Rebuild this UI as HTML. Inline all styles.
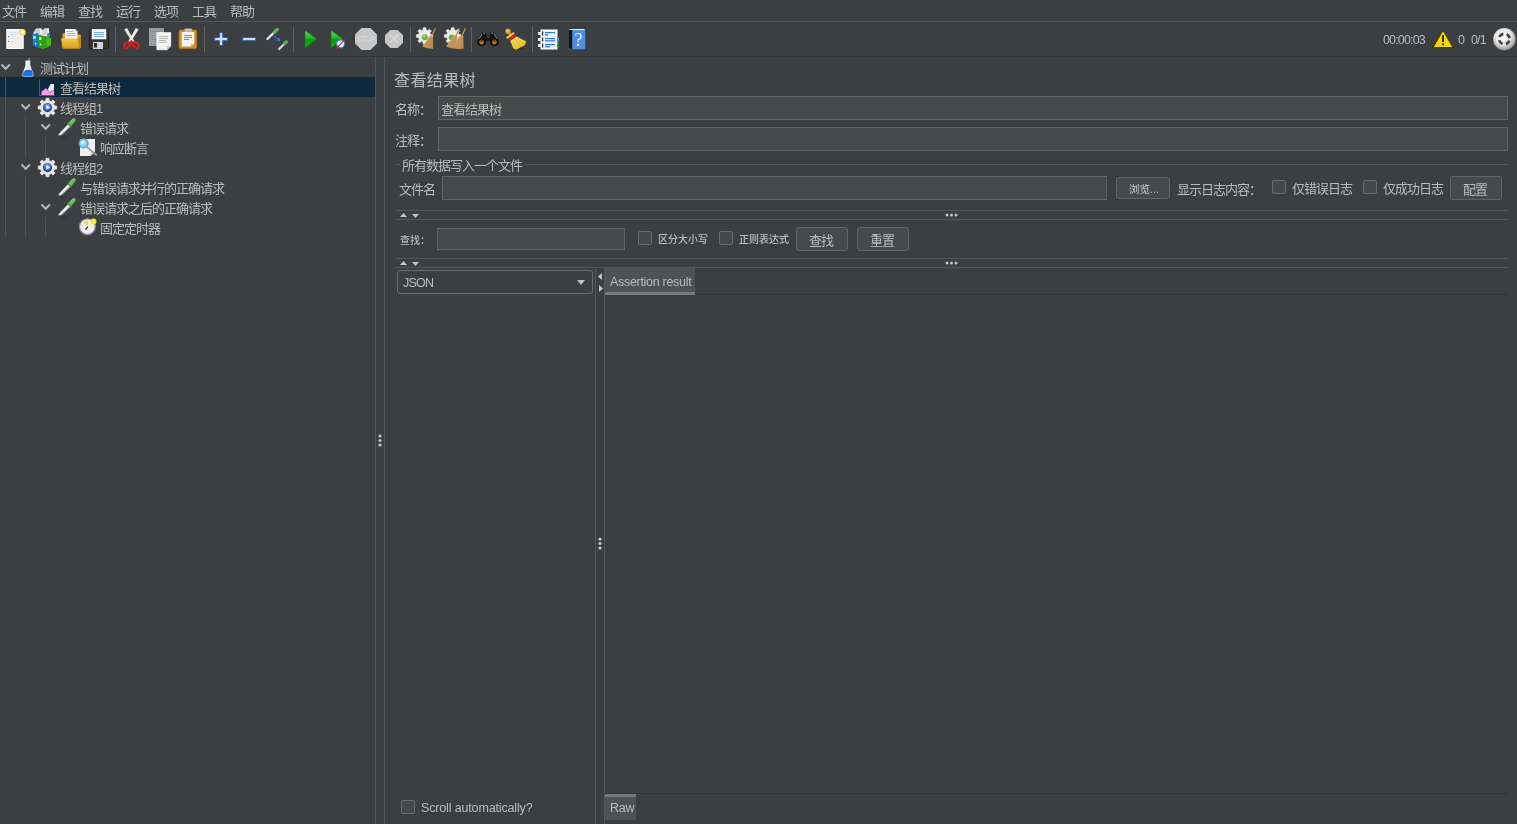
<!DOCTYPE html>
<html lang="zh-CN">
<head>
<meta charset="utf-8">
<title>Apache JMeter</title>
<style>
html,body{margin:0;padding:0;}
body{width:1517px;height:824px;overflow:hidden;background:#3c3f41;color:#bbbbbb;
  font-family:"Liberation Sans","Noto Sans CJK SC",sans-serif;font-size:12px;position:relative;}
.abs{position:absolute;}
#menubar,#toolbar,#tree,#panel{will-change:transform;}
.t{position:absolute;white-space:nowrap;line-height:16px;height:16px;font-size:13px;letter-spacing:-1px;color:#bbbbbb;margin-top:1px;}
.s{font-size:10px;letter-spacing:0;font-weight:500;}
.l{font-size:12.5px;letter-spacing:-0.3px;}
.hl{position:absolute;height:1px;background:#555555;}
.vl{position:absolute;width:1px;background:#555555;}
.fld{position:absolute;box-sizing:border-box;border:1px solid #646464;background:#45494a;}
.btn{position:absolute;box-sizing:border-box;border:1px solid #5f6668;border-radius:3px;background:#454a4b;text-align:center;}
.cb{position:absolute;box-sizing:border-box;width:14px;height:14px;border:1px solid #6b6b6b;border-radius:2px;background:#43494a;}
svg{position:absolute;overflow:visible;}
</style>
</head>
<body>

<!-- ===== menu bar ===== -->
<div id="menubar" class="abs" style="left:0;top:0;width:1517px;height:21px;">
  <div class="t" style="left:2px;top:3px;">文件</div>
  <div class="t" style="left:40px;top:3px;">编辑</div>
  <div class="t" style="left:78px;top:3px;">查找</div>
  <div class="t" style="left:116px;top:3px;">运行</div>
  <div class="t" style="left:154px;top:3px;">选项</div>
  <div class="t" style="left:192px;top:3px;">工具</div>
  <div class="t" style="left:230px;top:3px;">帮助</div>
</div>
<div class="hl" style="left:0;top:21px;width:1517px;"></div>

<!-- ===== toolbar ===== -->
<div id="toolbar" class="abs" style="left:0;top:0;width:1517px;height:0;">
  <div class="t l" style="left:1383px;top:31px;font-size:12.5px;letter-spacing:-0.85px;">00:00:03</div>
  <div class="t l" style="left:1458px;top:31px;font-size:12.5px;letter-spacing:-0.85px;">0</div>
  <div class="t l" style="left:1471px;top:31px;font-size:12.5px;letter-spacing:-0.85px;">0/1</div>
<!--TOOLBAR-->
</div>
<div class="hl" style="left:0;top:56px;width:1517px;background:#323537;"></div>

<!-- ===== tree ===== -->
<div id="tree" class="abs" style="left:0;top:0;width:375px;height:0;">
  <div class="abs" style="left:0;top:77px;width:375px;height:20px;background:#0d293e;"></div>

  <div class="vl" style="left:5px;top:77px;height:160px;"></div>
  <div class="vl" style="left:25px;top:117px;height:40px;"></div>
  <div class="vl" style="left:25px;top:177px;height:60px;"></div>
  <div class="vl" style="left:45px;top:137px;height:20px;"></div>
  <div class="vl" style="left:45px;top:217px;height:20px;"></div>
  <div class="t" style="left:40px;top:60px;">测试计划</div>
  <div class="t" style="left:60px;top:80px;">查看结果树</div>
  <div class="t" style="left:60px;top:100px;">线程组1</div>
  <div class="t" style="left:80px;top:120px;">错误请求</div>
  <div class="t" style="left:100px;top:140px;">响应断言</div>
  <div class="t" style="left:60px;top:160px;">线程组2</div>
  <div class="t" style="left:80px;top:180px;">与错误请求并行的正确请求</div>
  <div class="t" style="left:80px;top:200px;">错误请求之后的正确请求</div>
  <div class="t" style="left:100px;top:220px;">固定定时器</div>
<!--TREE-->
</div>
<div class="vl" style="left:375px;top:57px;height:767px;"></div>
<div class="vl" style="left:384px;top:57px;height:767px;"></div>

<!-- ===== right panel ===== -->
<div id="panel" class="abs" style="left:0;top:0;width:1517px;height:0;">

  <div class="t" style="left:394px;top:69px;font-size:16px;letter-spacing:0.4px;line-height:22px;height:22px;">查看结果树</div>
  <div class="t" style="left:395px;top:101px;">名称：</div>
  <div class="fld" style="left:438px;top:96px;width:1070px;height:24px;"></div>
  <div class="t" style="left:441px;top:101px;">查看结果树</div>
  <div class="t" style="left:395px;top:132px;">注释：</div>
  <div class="fld" style="left:438px;top:127px;width:1070px;height:24px;"></div>

  <div class="hl" style="left:397px;top:164px;width:3px;"></div>
  <div class="hl" style="left:524px;top:164px;width:983px;"></div>
  <div class="t" style="left:402px;top:157px;">所有数据写入一个文件</div>
  <div class="t" style="left:399px;top:181px;">文件名</div>
  <div class="fld" style="left:442px;top:176px;width:665px;height:24px;"></div>
  <div class="btn" style="left:1116px;top:177px;width:54px;height:22px;"><span class="t s" style="left:12px;top:2px;font-size:10.5px;">浏览...</span></div>
  <div class="t" style="left:1177px;top:181px;">显示日志内容：</div>
  <div class="cb" style="left:1272px;top:180px;"></div>
  <div class="t" style="left:1292px;top:180px;">仅错误日志</div>
  <div class="cb" style="left:1363px;top:180px;"></div>
  <div class="t" style="left:1383px;top:180px;">仅成功日志</div>
  <div class="btn" style="left:1450px;top:176px;width:52px;height:24px;"><span class="t" style="left:12px;top:4px;">配置</span></div>

  <div class="hl" style="left:395px;top:210px;width:1113px;"></div>
  <div class="hl" style="left:395px;top:219px;width:1113px;"></div>

  <div class="t s" style="left:400px;top:232px;">查找：</div>
  <div class="fld" style="left:437px;top:228px;width:188px;height:22px;"></div>
  <div class="cb" style="left:638px;top:231px;"></div>
  <div class="t s" style="left:658px;top:231px;">区分大小写</div>
  <div class="cb" style="left:719px;top:231px;"></div>
  <div class="t s" style="left:739px;top:231px;">正则表达式</div>
  <div class="btn" style="left:796px;top:227px;width:52px;height:24px;"><span class="t" style="left:12px;top:4px;">查找</span></div>
  <div class="btn" style="left:857px;top:227px;width:52px;height:24px;"><span class="t" style="left:12px;top:4px;">重置</span></div>

  <div class="hl" style="left:395px;top:258px;width:1113px;"></div>
  <div class="hl" style="left:395px;top:267px;width:1113px;"></div>

  <div class="btn" style="left:397px;top:270px;width:196px;height:24px;background:#3c3f41;border-color:#6b6b6b;"><span class="t l" style="left:5px;top:3px;letter-spacing:-0.8px;">JSON</span></div>
  <div class="vl" style="left:595px;top:268px;height:556px;"></div>
  <div class="vl" style="left:604px;top:268px;height:556px;"></div>
  <div class="abs" style="left:605px;top:268px;width:90px;height:27px;background:#4e5254;"></div>
  <div class="abs" style="left:605px;top:292px;width:90px;height:3px;background:#747a80;"></div>
  <div class="t l" style="left:610px;top:273px;">Assertion result</div>
  <div class="hl" style="left:695px;top:294px;width:813px;background:#323537;"></div>

  <div class="cb" style="left:401px;top:800px;"></div>
  <div class="t l" style="left:421px;top:799px;letter-spacing:-0.15px;">Scroll automatically?</div>
  <div class="hl" style="left:605px;top:793px;width:903px;background:#323537;"></div>
  <div class="abs" style="left:605px;top:794px;width:31px;height:26px;background:#4e5254;"></div>
  <div class="abs" style="left:605px;top:794px;width:31px;height:3px;background:#747a80;"></div>
  <div class="t l" style="left:610px;top:799px;">Raw</div>
<!--PANEL-->
</div>

<!--ICONS-->
<svg id="icons" width="1517" height="824" viewBox="0 0 1517 824" style="left:0;top:0;">
<defs>
  <linearGradient id="gGreen" x1="0" y1="0" x2="0" y2="1"><stop offset="0" stop-color="#5fd65f"/><stop offset="0.45" stop-color="#1fb81f"/><stop offset="0.5" stop-color="#0a9a0a"/><stop offset="1" stop-color="#08c008"/></linearGradient>
  <linearGradient id="gFolder" x1="0" y1="0" x2="0" y2="1"><stop offset="0" stop-color="#f3c64a"/><stop offset="1" stop-color="#d99a1c"/></linearGradient>
  <radialGradient id="gSphere" cx="0.45" cy="0.4" r="0.6"><stop offset="0" stop-color="#ffffff"/><stop offset="0.6" stop-color="#e4e4e4"/><stop offset="1" stop-color="#8f8f8f"/></radialGradient>
  <radialGradient id="gBlue" cx="0.5" cy="0.35" r="0.7"><stop offset="0" stop-color="#9cc8f0"/><stop offset="0.5" stop-color="#3a66c0"/><stop offset="1" stop-color="#142c80"/></radialGradient>
  <radialGradient id="gLens" cx="0.4" cy="0.4" r="0.7"><stop offset="0" stop-color="#b8ecff"/><stop offset="1" stop-color="#58b8f0"/></radialGradient>
  <linearGradient id="gBroom" x1="0" y1="0" x2="1" y2="1"><stop offset="0" stop-color="#d8b078"/><stop offset="1" stop-color="#b8864a"/></linearGradient>
  <linearGradient id="gYBroom" x1="0" y1="0" x2="1" y2="1"><stop offset="0" stop-color="#fbe96a"/><stop offset="1" stop-color="#e0b818"/></linearGradient>
</defs>

<!-- toolbar separators -->
<g fill="#616365">
  <rect x="115" y="27" width="1" height="25"/>
  <rect x="204" y="27" width="1" height="25"/>
  <rect x="293" y="27" width="1" height="25"/>
  <rect x="410" y="27" width="1" height="25"/>
  <rect x="471" y="27" width="1" height="25"/>
  <rect x="532" y="27" width="1" height="25"/>
</g>

<!-- new -->
<g>
  <rect x="6.8" y="29.5" width="16.4" height="19" fill="#efefef" stroke="#ffffff" stroke-width="1"/>
  <g fill="#c9d9ee" opacity="0.6"><rect x="9" y="32" width="8" height="1"/><rect x="10" y="34" width="7" height="1"/><rect x="11" y="36" width="4" height="1"/><rect x="11" y="38" width="5" height="1"/><rect x="10" y="41" width="4" height="1"/></g>
  <circle cx="8.5" cy="36.5" r="0.6" fill="#55557a"/><circle cx="8.5" cy="41.5" r="0.6" fill="#55557a"/>
  <circle cx="22.3" cy="32.5" r="3.4" fill="#f3df6a"/>
  <circle cx="22.3" cy="32.2" r="1.5" fill="#ffffff"/>
</g>

<!-- templates -->
<g>
  <polygon points="33,33.5 36,28.6 41,28.2 42.5,30 45,28.2 49,28.2 49.4,37 43,36 38,35" fill="#e2e2e2"/>
  <polygon points="35.5,30.5 39.5,28.6 40,33.5 36,34" fill="#c6c6c6"/>
  <polygon points="42.5,30.5 47,28.6 47.3,34 43,35" fill="#d0d0d0"/>
  <polygon points="40,29 41.5,28.6 42,34 40.5,34" fill="#f8f8f8"/>
  <polygon points="47.2,33.6 49.3,33 49.5,37.6 47.3,37" fill="#2a8adc"/>
  <polygon points="32,34 38.3,33.2 39,47.8 33.4,45.6" fill="#1a86d8"/>
  <polygon points="36,33.5 38.3,33.2 39,47.8 36.6,46.9" fill="#1272c4"/>
  <rect x="33.3" y="36.2" width="2.4" height="2.6" fill="#d8e8f0"/>
  <rect x="35" y="43" width="1.3" height="1.3" fill="#e8eef8"/>
  <polygon points="38,35.2 42.5,35.8 43,49 38.5,47.6" fill="#22a814"/>
  <polygon points="42.5,35.8 51,38 51,45.5 43,49" fill="#48b80e"/>
  <polygon points="42.5,35.8 46.5,36.9 46.5,47.4 43,49" fill="#2c9e0c"/>
  <rect x="39.2" y="37.2" width="2.2" height="2.8" fill="#e8f4d0"/>
  <rect x="39.8" y="43.8" width="1.4" height="1.4" fill="#f0f8e8"/>
</g>

<!-- open -->
<g>
  <polygon points="62.5,34 64,33 70,33 71,34.5 80.5,34.5 81,36 81,47.5 62.5,47.5" fill="#e3a51c"/>
  <polygon points="65,29 75,29 77.5,31.5 77.5,39 65,39" fill="#f4f6fa"/>
  <polygon points="75,29 77.5,31.5 75,31.5" fill="#c8ccd4"/>
  <g fill="#a8b4cc"><rect x="66.5" y="31" width="7" height="1"/><rect x="66.5" y="33" width="9" height="1"/><rect x="66.5" y="35" width="9" height="1"/></g>
  <polygon points="61,38.5 77.5,38.5 79.7,48.7 62.7,48.7" fill="url(#gFolder)"/>
  <polygon points="77.5,38.5 81,36.5 81,47.5 79.7,48.7" fill="#c98a12"/>
</g>

<!-- save -->
<g>
  <rect x="89.4" y="29.2" width="19.2" height="19.6" rx="1" fill="#343434" stroke="#1c1c1c" stroke-width="0.8"/>
  <rect x="92" y="29.2" width="14" height="9.8" fill="#f2f6fc" stroke="#ffffff" stroke-width="0.5"/>
  <g fill="#7aaeea"><rect x="94" y="32" width="10" height="1"/><rect x="94" y="34" width="10" height="1"/><rect x="94" y="36" width="10" height="1"/></g>
  <rect x="93" y="42" width="10" height="7" fill="#d4d4d4"/>
  <rect x="94" y="43" width="3" height="4.5" fill="#2a2a2a"/>
</g>

<!-- cut -->
<g>
  <polygon points="124.2,29.4 127,28 135.2,42.6 133,43.6" fill="#e6e6de"/>
  <polygon points="138.6,29.4 135.8,28 127.6,42.6 129.8,43.6" fill="#f0f0e8"/>
  <ellipse cx="127" cy="45" rx="3.3" ry="2.3" transform="rotate(-38 127 45)" fill="none" stroke="#e21a1a" stroke-width="2.2"/>
  <ellipse cx="135.8" cy="45" rx="3.3" ry="2.3" transform="rotate(38 135.8 45)" fill="none" stroke="#e21a1a" stroke-width="2.2"/>
  <polygon points="128.8,42.8 131.4,40 134,42.8 132.8,44 131.4,42.4 130,44" fill="#e21a1a"/>
  <circle cx="131.4" cy="40.6" r="0.7" fill="#555"/>
</g>

<!-- copy -->
<g>
  <rect x="149.3" y="28.5" width="14.2" height="17" fill="#9a9ca4" stroke="#b4b6bc" stroke-width="0.6"/>
  <g fill="#7f8aa8"><rect x="152" y="31" width="9" height="1"/><rect x="152" y="35" width="3" height="1"/><rect x="152" y="39" width="5" height="1"/></g>
  <polygon points="156.8,32.5 170.8,32.5 170.8,46 167,49.8 156.8,49.8" fill="#f4f4f2" stroke="#ffffff" stroke-width="0.6"/>
  <polygon points="170.8,46 167,49.8 167,46" fill="#c4c8c4"/>
  <g fill="#b4b6b4"><rect x="159" y="36" width="9" height="1"/><rect x="159" y="38" width="9" height="1"/><rect x="159" y="40" width="7" height="1"/><rect x="159" y="42" width="8" height="1"/></g>
</g>

<!-- paste -->
<g>
  <rect x="179" y="30" width="17.6" height="18.6" rx="1.5" fill="#d4901c" stroke="#b87812" stroke-width="0.7"/>
  <polygon points="181.7,32 194.2,32 194.2,43.5 191,46.4 181.7,46.4" fill="#f4f4f2"/>
  <polygon points="194.2,43.5 191,46.4 191,43.5" fill="#c8c8c0"/>
  <rect x="184.5" y="28.5" width="7.5" height="3.5" rx="1" fill="#b8b8b4"/>
  <rect x="185.5" y="29.2" width="5.5" height="1.2" fill="#d8c8b8"/>
  <g fill="#8a8a8a"><rect x="184" y="35" width="8" height="1"/><rect x="184" y="37" width="8" height="1"/><rect x="184" y="39" width="5" height="1"/></g>
</g>

<!-- plus / minus -->
<g>
  <path d="M219.5 32.7h3.2v4.8h4.8v3.2h-4.8v4.8h-3.2v-4.8h-4.8v-3.2h4.8z" fill="#cfe0f8" stroke="#2a62b4" stroke-width="1"/>
  <rect x="242.7" y="37.5" width="13" height="3.2" fill="#cfe0f8" stroke="#2a62b4" stroke-width="1"/>
</g>

<!-- toggle -->
<g>
  <line x1="267.4" y1="39" x2="274" y2="32.6" stroke="#e8e8e8" stroke-width="2.2" stroke-linecap="round"/>
  <line x1="274.3" y1="32.3" x2="277.3" y2="29.4" stroke="#5cb85c" stroke-width="3.2" stroke-linecap="round"/>
  <line x1="274.3" y1="36.2" x2="278.2" y2="39.6" stroke="#2a7be4" stroke-width="1.1"/>
  <polygon points="280.2,41.2 276,40.8 279.6,37.2" fill="#2a7be4"/>
  <line x1="278.5" y1="49.6" x2="284" y2="44.2" stroke="#d4d4d4" stroke-width="2.2"/>
  <line x1="284" y1="44.2" x2="287.3" y2="41" stroke="#5cb85c" stroke-width="3.2"/>
</g>

<!-- run -->
<polygon points="305,30.2 316.9,39 305,48.1" fill="url(#gGreen)" stroke="#0c6e0c" stroke-width="0.5"/>
<!-- run no pause -->
<g>
  <polygon points="331,30.2 342.9,39 331,48.1" fill="url(#gGreen)" stroke="#0c6e0c" stroke-width="0.5"/>
  <circle cx="340.6" cy="43.8" r="4" fill="#f4f8ff" stroke="#3a7ad4" stroke-width="1.3"/>
  <line x1="336.3" y1="48.5" x2="345" y2="39.4" stroke="#e02020" stroke-width="1.1"/>
</g>

<!-- stop -->
<g>
  <polygon points="361.5,28 370.5,28 377,34.5 377,43.5 370.5,50 361.5,50 355,43.5 355,34.5" fill="#c6c6c6"/>
  <text x="366" y="42.4" text-anchor="middle" font-family="Liberation Sans, sans-serif" font-weight="bold" font-size="8.5" fill="#d6d6d6" textLength="19" lengthAdjust="spacingAndGlyphs">STOP</text>
</g>
<!-- shutdown -->
<g>
  <polygon points="390.3,30 397.7,30 403,35.3 403,42.7 397.7,48 390.3,48 385,42.7 385,35.3" fill="#c6c6c6"/>
  <path d="M390 35l8 8M398 35l-8 8" stroke="#d8dcc8" stroke-width="1.6" fill="none"/>
</g>
<!-- gear def for clear icons -->
<!-- clear -->
<g>
  <path id="gearW" d="M423.15 29.97L423.3 27.8L425.9 27.8L426.05 29.97L427.84 30.71L429.48 29.29L431.31 31.12L429.89 32.76L430.63 34.55L432.8 34.7L432.8 37.3L430.63 37.45L429.89 39.24L431.31 40.88L429.48 42.71L427.84 41.29L426.05 42.03L425.9 44.2L423.3 44.2L423.15 42.03L421.36 41.29L419.72 42.71L417.89 40.88L419.31 39.24L418.57 37.45L416.4 37.3L416.4 34.7L418.57 34.55L419.31 32.76L417.89 31.12L419.72 29.29L421.36 30.71Z" fill="#ececec" stroke="#ececec" stroke-width="0.7" stroke-linejoin="round"/>
  <circle cx="424.8" cy="37.3" r="3" fill="#58c020"/>
  <circle cx="424.2" cy="36.5" r="1.3" fill="#a8e870"/>
  <line x1="435.3" y1="28.3" x2="431.2" y2="37.5" stroke="#c49458" stroke-width="1.3"/>
  <polygon points="430.2,35.5 433,36.6 433.2,49 427.5,48.2 422.2,46.6" fill="url(#gBroom)"/>
  <path d="M430.8 37l-5.5 9.5M431.5 37l-2.5 11M432.2 37.5l-.2 11" stroke="#a87840" stroke-width="0.5" fill="none"/>
</g>
<!-- clear all -->
<g>
  <use href="#gearW" x="28.2" y="0"/>
  <circle cx="451.6" cy="37.2" r="2.8" fill="#58c020"/>
  <line x1="459.3" y1="28.3" x2="455.5" y2="37" stroke="#c49458" stroke-width="1.3"/>
  <line x1="465.3" y1="28.3" x2="461.5" y2="37" stroke="#c49458" stroke-width="1.3"/>
  <polygon points="454.5,35 457.3,36 457.5,49 451.5,48.2 446,46.5" fill="url(#gBroom)"/>
  <polygon points="460.5,35 463.3,36 463.6,48.8 457.5,49 453,47" fill="url(#gBroom)"/>
  <path d="M455 37l-5.5 9.5M456 37l-2.5 11M461 37l-4.5 10.5M462.2 37l-1.2 11.5" stroke="#a87840" stroke-width="0.5" fill="none"/>
</g>

<!-- binoculars -->
<g>
  <path d="M481.5 32.3h3.8l1.6 2.8h2.4l1.6-2.8h3.8l4.3 8.2v3l-2.5 2.3h-4.2l-2.5-2.6v-2.4h-3.4v2.4l-2.5 2.6h-4.2l-2.5-2.3v-3z" fill="#151515"/>
  <path d="M482 33.5l-3.2 6M494.2 33.5l3 5.5" stroke="#787c80" stroke-width="1.1" fill="none"/>
  <path d="M483.5 33.2h1.5M491.5 33.2h1.5" stroke="#b0b4b8" stroke-width="1" fill="none"/>
  <path d="M486 35.8h4.4l-2.2 2.4z" fill="#4a4c4e"/>
  <circle cx="481.6" cy="42" r="3.2" fill="#8a4a12" stroke="#0a0a0a" stroke-width="1.2"/>
  <circle cx="494.3" cy="42" r="3.2" fill="#8a4a12" stroke="#0a0a0a" stroke-width="1.2"/>
  <path d="M479.3 42.3a2.4 2.4 0 0 0 4.6 0z" fill="#c88a2c"/>
  <path d="M492 42.3a2.4 2.4 0 0 0 4.6 0z" fill="#c88a2c"/>
  <circle cx="481.2" cy="41.3" r="0.8" fill="#b02818"/>
  <circle cx="494" cy="41.3" r="0.8" fill="#b02818"/>
</g>

<!-- yellow broom -->
<g>
  <ellipse cx="519" cy="48.5" rx="6" ry="1.3" fill="#2c2e30" opacity="0.6"/>
  <circle cx="508" cy="31.3" r="2.8" fill="#d4941c"/>
  <circle cx="507.8" cy="31" r="1.5" fill="#ecc068"/>
  <line x1="509.5" y1="33.5" x2="511.5" y2="36" stroke="#d4941c" stroke-width="3"/>
  <polygon points="506,37.3 513.6,32 514.8,33.6 507.2,39" fill="#ecc828"/>
  <polygon points="508.7,38.6 515,34.2 516.6,36.6 510.3,41" fill="#e21c1c"/>
  <path d="M510.3 41l6.3-4.4 9.2 4.6q.8 2-1.2 4l-8.4 4.6-2.8-1.4z" fill="url(#gYBroom)"/>
  <path d="M513 41l3.5 7.5M515 39.5l6 7.5M517 38.5l6.5 5" stroke="#d0a408" stroke-width="0.6" fill="none"/>
</g>

<!-- function helper (notebook) -->
<g>
  <rect x="541" y="30" width="16" height="19" fill="#f0f0f0" stroke="#ffffff" stroke-width="1"/>
  <g fill="#2a78f0"><rect x="545" y="32" width="10" height="1.2"/><rect x="545" y="34.2" width="3" height="1.2"/><rect x="545" y="38" width="10" height="1.2"/><rect x="545" y="40.2" width="10" height="1.2"/><rect x="545" y="44" width="10" height="1.2"/><rect x="545" y="46.2" width="5" height="1.2"/></g>
  <g><rect x="538" y="32" width="4.5" height="3" fill="#e8e8e8"/><rect x="538" y="38" width="4.5" height="3" fill="#e8e8e8"/><rect x="538" y="44" width="4.5" height="3" fill="#e8e8e8"/>
  <rect x="542.2" y="31.5" width="1" height="4" fill="#101010"/><rect x="542.2" y="37.5" width="1" height="4" fill="#101010"/><rect x="542.2" y="43.5" width="1" height="4" fill="#101010"/></g>
  <rect x="557.3" y="37" width="1.8" height="5" fill="#3a88e8"/>
  <rect x="557.3" y="43" width="1.8" height="5" fill="#189818"/>
</g>

<!-- help -->
<g>
  <rect x="569" y="29.5" width="16.2" height="19.8" fill="#4e8fe0"/>
  <polygon points="569,29.8 572.2,29 572.2,49.3 569,48.5" fill="#141414"/>
  <rect x="569.5" y="29" width="15" height="1" fill="#f4f4f4"/>
  <text x="578.6" y="46.2" text-anchor="middle" font-family="Liberation Serif, serif" font-size="18" fill="#e8f0fc">?</text>
</g>

<!-- warning triangle -->
<g>
  <polygon points="1443,30 1453.3,47.6 1432.7,47.6" fill="#f6d800" stroke="#4a3c06" stroke-width="1.4" stroke-linejoin="round"/>
  <rect x="1442.2" y="35" width="1.7" height="7" fill="#101010"/>
  <rect x="1442.2" y="43.4" width="1.7" height="1.8" fill="#101010"/>
</g>

<!-- round status icon -->
<g>
  <circle cx="1504.4" cy="39.2" r="11.2" fill="url(#gSphere)"/>
  <circle cx="1504.4" cy="39" r="5.3" fill="none" stroke="#454545" stroke-width="2.8" stroke-dasharray="4.9 3.425" stroke-dashoffset="-1.71"/>
</g>
<!-- tree chevrons -->
<g fill="none" stroke="#b4b6b8" stroke-width="2">
  <path d="M1.5 64.5l4.2 4.3 4.2-4.3"/>
  <path d="M21.5 104.5l4.2 4.3 4.2-4.3"/>
  <path d="M41.5 124.5l4.2 4.3 4.2-4.3"/>
  <path d="M21.5 164.5l4.2 4.3 4.2-4.3"/>
  <path d="M41.5 204.5l4.2 4.3 4.2-4.3"/>
</g>

<!-- flask (test plan) -->
<g>
  <line x1="28.6" y1="61" x2="29.4" y2="58" stroke="#c8c8c8" stroke-width="0.9"/>
  <path d="M25.5 60.5h4.8v4.5l3 9.5q.3 2-1.5 2h-7.8q-1.8 0-1.5-2l3-9.5z" fill="#e4e8ee"/>
  <path d="M23.7 70.5h8.4l1.2 4q.3 2-1.5 2h-7.8q-1.8 0-1.5-2z" fill="#1a74e8" stroke="#8cbcf4" stroke-width="0.7"/>
  <path d="M24.5 70.2h6.8l.4 1.5h-7.6z" fill="#1458b8"/>
  <path d="M26.3 61.5v4l-2 6" stroke="#ffffff" stroke-width="0.9" fill="none"/>
</g>

<!-- result tree icon -->
<g>
  <path d="M39.5 79.5v16h15.5" stroke="#6a6a88" stroke-width="0.8" fill="none"/>
  <polygon points="47.5,90 50.5,84 54,84 54,92 50,93.5" fill="#dcecfc"/>
  <polygon points="50.5,84 54,84 54,88" fill="#ffffff"/>
  <polygon points="41.5,95 41.5,91.5 46,88.3 50,92.5 54,90 54,95" fill="#f4a0e4"/>
  <path d="M41.5 91.5l4.5-3.2 4 4.2 4-2.5" stroke="#d838a8" stroke-width="0.9" fill="none"/>
</g>

<!-- gears (thread groups) -->
<g id="tg1">
  <path d="M45.87 100.69L46.05 98.31L48.95 98.31L49.13 100.69L51.16 101.53L52.97 99.98L55.02 102.03L53.47 103.84L54.31 105.87L56.69 106.05L56.69 108.95L54.31 109.13L53.47 111.16L55.02 112.97L52.97 115.02L51.16 113.47L49.13 114.31L48.95 116.69L46.05 116.69L45.87 114.31L43.84 113.47L42.03 115.02L39.98 112.97L41.53 111.16L40.69 109.13L38.31 108.95L38.31 106.05L40.69 105.87L41.53 103.84L39.98 102.03L42.03 99.98L43.84 101.53Z" fill="#e6e6e6" stroke="#e6e6e6" stroke-width="0.8" stroke-linejoin="round"/>
  <circle cx="47.5" cy="107.6" r="4.6" fill="url(#gBlue)"/>
  <polygon points="46.3,105.3 50.3,107.5 46.3,109.7" fill="#eef4ff"/>
</g>
<use href="#tg1" x="0" y="60"/>

<!-- pipettes (samplers) -->
<g id="pip1" transform="translate(0.4 0.8)">
  <line x1="60.5" y1="136.5" x2="68.5" y2="136.5" stroke="#2f3133" stroke-width="0.8"/>
  <polygon points="58,134.7 58.6,132.6 67.8,123.2 70.2,125.6 60.8,134.5" fill="#d8dadc"/>
  <line x1="60" y1="132.8" x2="68" y2="124.8" stroke="#ffffff" stroke-width="0.9"/>
  <line x1="61.5" y1="134" x2="69.7" y2="126" stroke="#8a8c8e" stroke-width="0.8"/>
  <path d="M67.6 122.2l5-4.4q1.6-.8 2.4.2.9 1 0 2.4l-4.4 5z" fill="#62bc5a"/>
  <path d="M67.2 122.6l3.8 3.8" stroke="#3f9a3a" stroke-width="1.3"/>
  <path d="M69.5 121l4-3.5" stroke="#9ce090" stroke-width="0.9"/>
</g>
<use href="#pip1" x="0" y="60"/>
<use href="#pip1" x="0" y="80"/>

<!-- assertion (magnifier on page) -->
<g>
  <polygon points="80,139 95,139 95,151.5 90.5,156 80,156" fill="#f0f0f0"/>
  <polygon points="95,151.5 90.5,156 90.5,151.5" fill="#d4d4d4"/>
  <line x1="87.3" y1="147.3" x2="96.3" y2="155" stroke="#9a9ca4" stroke-width="1.7" stroke-linecap="round"/>
  <circle cx="83.6" cy="143.4" r="4.5" fill="url(#gLens)" stroke="#5a94d8" stroke-width="1.2"/>
  <circle cx="82.8" cy="142.3" r="1.6" fill="#dcf6ff"/>
</g>

<!-- timer -->
<g>
  <circle cx="87.4" cy="226.7" r="7.9" fill="#f0f0ea" stroke="#8e86b0" stroke-width="1.3"/>
  <polygon points="87.6,226.5 83.6,222.2 87.2,220.5 88.6,222" fill="#e8d468"/>
  <line x1="87.7" y1="226.6" x2="85.5" y2="229.8" stroke="#2a2a2a" stroke-width="1.2"/>
  <circle cx="93.5" cy="221.5" r="3" fill="#f6e020"/>
  <circle cx="93.5" cy="221.3" r="1.1" fill="#fffbd0"/>
</g>

<!-- divider dots on main split -->
<g fill="#c4c6c8">
  <circle cx="380" cy="436" r="1.6"/><circle cx="380" cy="440.5" r="1.6"/><circle cx="380" cy="445" r="1.6"/>
  <circle cx="600" cy="539" r="1.6"/><circle cx="600" cy="543.5" r="1.6"/><circle cx="600" cy="548" r="1.6"/>
  <circle cx="947" cy="215" r="1.5"/><circle cx="951.5" cy="215" r="1.5"/><circle cx="956" cy="215" r="1.5"/>
  <circle cx="947" cy="263" r="1.5"/><circle cx="951.5" cy="263" r="1.5"/><circle cx="956" cy="263" r="1.5"/>
</g>
<!-- one-touch arrows -->
<g fill="#c4c6c8">
  <polygon points="400,217 407,217 403.5,213"/>
  <polygon points="412,214 419,214 415.5,218"/>
  <polygon points="400,265 407,265 403.5,261"/>
  <polygon points="412,262 419,262 415.5,266"/>
  <polygon points="602,273 602,280 598,276.5"/>
  <polygon points="599,285 599,292 603,288.5"/>
</g>
<!-- combo arrow -->
<polygon points="577,280 585,280 581,285" fill="#bfc1c3"/>
</svg>

</body>
</html>
